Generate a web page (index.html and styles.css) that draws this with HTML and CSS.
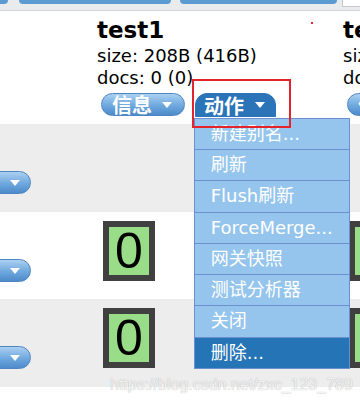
FILE: index.html
```html
<!DOCTYPE html>
<html>
<head>
<meta charset="utf-8">
<link rel="stylesheet" href="styles.css">
</head>
<body>
<div class="page">
  <div class="topstrip">
    <span class="bar bar-stub"></span>
    <span class="bar bar-a"></span>
    <span class="bar bar-b"></span>
    <span class="topbox"></span>
  </div>

  <div class="row header">
    <div class="namecell"></div>
    <div class="col">
      <div class="title">test1</div>
      <div class="meta">size: 208B (416B)</div>
      <div class="meta">docs: 0 (0)</div>
      <div class="actions">
        <span class="btn btn-info">信息<i class="tri"></i></span>
        <span class="btn-wrap">
          <span class="btn btn-act active">动作<i class="tri"></i></span>
          <ul class="menu">
            <li>新建别名...</li>
            <li>刷新</li>
            <li>Flush刷新</li>
            <li>ForceMerge...</li>
            <li>网关快照</li>
            <li>测试分析器</li>
            <li>关闭</li>
            <li class="selected">删除...</li>
          </ul>
        </span>
      </div>
    </div>
    <div class="col">
      <div class="title">test2</div>
      <div class="meta">size: 208B (416B)</div>
      <div class="meta">docs: 0 (0)</div>
      <div class="actions">
        <span class="btn btn-info">信息<i class="tri"></i></span>
      </div>
    </div>
  </div>

  <div class="row r alt">
    <div class="namecell"><span class="btn btn-act">动作<i class="tri"></i></span></div>
    <div class="col"></div>
    <div class="col"></div>
  </div>

  <div class="row r">
    <div class="namecell"><span class="btn btn-act">动作<i class="tri"></i></span></div>
    <div class="col"><div class="box">0</div></div>
    <div class="col"><div class="box">0</div></div>
  </div>

  <div class="row r alt">
    <div class="namecell"><span class="btn btn-act">动作<i class="tri"></i></span></div>
    <div class="col"><div class="box">0</div></div>
    <div class="col"><div class="box">0</div></div>
  </div>

  <span class="annot"></span>
  <span class="dot"></span>
  <div class="watermark">https://blog.csdn.net/zxc_123_789</div>
</div>
</body>
</html>
```

FILE: styles.css
```css
html, body {
  margin: 0;
  padding: 0;
  background: #fff;
}
body {
  font-family: "DejaVu Sans", "Noto Sans CJK SC", sans-serif;
  color: #000;
}
.page {
  position: relative;
  width: 360px;
  height: 405px;
  overflow: hidden;
}

/* top strip */
.topstrip {
  height: 10px;
  background: #e9ebed;
  border-bottom: 1px solid #d3d5d8;
  display: flex;
  align-items: flex-start;
}
.bar {
  height: 3.5px;
  background: #5b9bd2;
  border-radius: 0 0 4px 4px;
  flex: none;
}
.bar-stub { width: 8px; border-radius: 0 0 4px 0; }
.bar-a { margin-left: 11px; width: 152px; }
.bar-b { margin-left: 9px; width: 157px; }
.topbox {
  flex: none;
  margin-left: 5px;
  width: 18px;
  height: 6px;
  background: #fff;
  border-left: 1px solid #c6c8cb;
  border-bottom: 1px solid #c6c8cb;
}

/* rows */
.row {
  display: flex;
}
.header { height: 113px; }
.r { height: 88px; }
.r:nth-of-type(4) { height: 87px; }
.alt { background: #ededed; }

.namecell {
  width: 97px;
  flex: none;
}
.col {
  width: 246px;
  flex: none;
}
.header .col { padding-top: 4.3px; box-sizing: border-box; }

.title {
  font-weight: bold;
  font-size: 23px;
  line-height: 30px;
  white-space: nowrap;
}
.meta {
  font-size: 18px;
  line-height: 21.5px;
  white-space: nowrap;
}

.actions {
  display: flex;
  align-items: flex-start;
  gap: 10px;
  margin-top: 5px;
  padding-left: 4px;
}

/* buttons */
.btn {
  display: inline-flex;
  align-items: center;
  box-sizing: border-box;
  height: 23px;
  border: 1px solid #4f86c2;
  border-radius: 12px;
  background: linear-gradient(#abd0f1, #6ea8de 55%, #4c8bca);
  color: #fff;
  font-family: "Noto Sans CJK SC", sans-serif;
  font-weight: bold;
  font-size: 20px;
  line-height: 21px;
  white-space: nowrap;
  flex: none;
}
.btn-info { padding: 0 12px 0 10px; }
.btn-act { padding: 0 10px 0 8px; }
.btn-act .tri { margin-left: 11px; border-left-width: 5.5px; border-right-width: 5.5px; }
.tri {
  display: inline-block;
  width: 0;
  height: 0;
  margin-left: 10px;
  border-left: 5px solid transparent;
  border-right: 5px solid transparent;
  border-top: 6px solid #fff;
}
.btn.active {
  height: 24px;
  background: #2b74b8;
  border-color: #2b74b8;
  border-radius: 12px 12px 0 0;
}
.btn-wrap {
  position: relative;
  display: inline-block;
}
.namecell .btn {
  margin-top: 47px;
  margin-left: -50px;
}

/* dropdown menu */
.menu {
  position: absolute;
  left: -1px;
  top: 100%;
  width: 156px;
  box-sizing: border-box;
  margin: 0;
  padding: 0;
  list-style: none;
  background: #95c5ec;
  border: 1px solid #6c90cf;
  border-bottom: none;
  z-index: 5;
}
.menu li {
  height: 30.25px;
  line-height: 30.25px;
  border-bottom: 1px solid #6c90cf;
  padding-left: 15.7px;
  color: #fff;
  font-family: "DejaVu Sans", "Noto Sans CJK SC", sans-serif;
  font-size: 18px;
  white-space: nowrap;
}
.menu li.selected {
  background: #2574b6;
}

/* shard boxes */
.box {
  width: 52px;
  height: 60px;
  box-sizing: border-box;
  margin: 8.5px 0 0 6px;
  border: 6px solid #404040;
  background: #99dd88;
  text-align: center;
  font-family: "Liberation Sans", sans-serif;
  font-size: 50px;
  line-height: 48px;
  color: #000;
}

/* overlays */
.annot {
  position: absolute;
  left: 191.5px;
  top: 79px;
  width: 99px;
  height: 48.5px;
  box-sizing: border-box;
  border: 2px solid #e4242d;
  z-index: 10;
}
.dot {
  position: absolute;
  left: 311px;
  top: 22px;
  width: 1.5px;
  height: 1.5px;
  background: #e4242d;
}
.watermark {
  position: absolute;
  left: 110px;
  top: 375.7px;
  font-family: "Liberation Sans", sans-serif;
  font-size: 16px;
  line-height: 18px;
  color: rgba(255, 255, 255, 0.85);
  text-shadow: 0 0 1px rgba(0, 0, 0, 0.35);
  white-space: nowrap;
  z-index: 20;
}
```
